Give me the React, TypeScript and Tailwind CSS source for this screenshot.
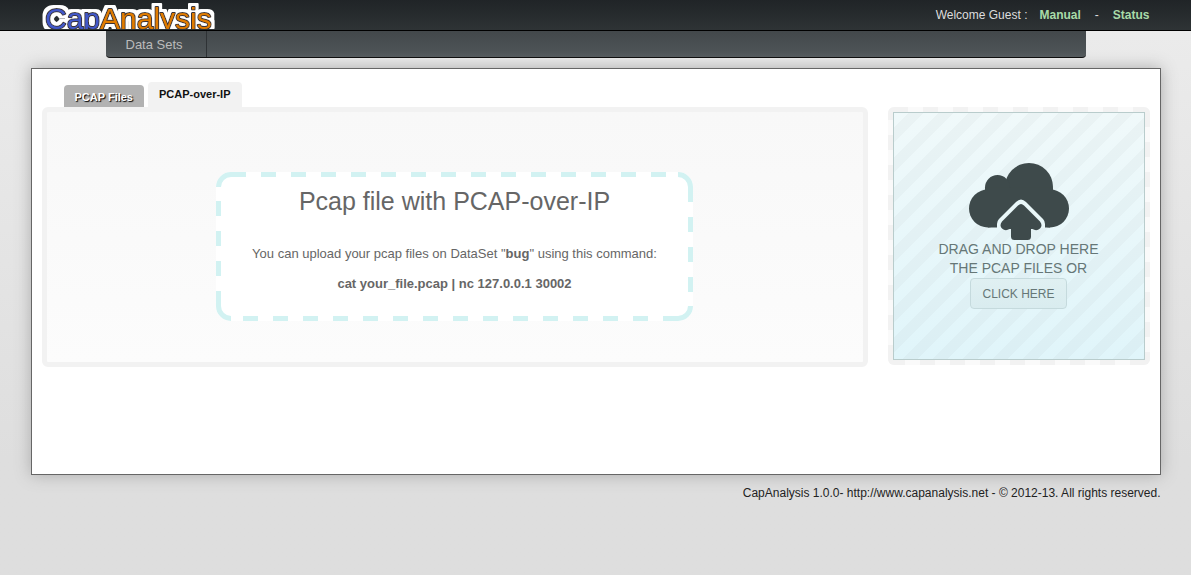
export default function App() {
  return (
    <div className="min-h-screen bg-linear-to-b from-[#ececec] to-[#dedede] to-80% font-['Liberation_Sans',Arial,sans-serif] text-xs text-[#222]">
      <header className="h-[31px] border-b border-black bg-linear-to-b from-[#202427] to-[#2e3335]">
        <div className="mx-auto flex h-full max-w-[1108px] items-center justify-between">
          <a href="#" aria-label="CapAnalysis" className="block h-[30px]">
            <svg width="175" height="30" viewBox="0 0 175 30" className="font-['Liberation_Sans',Arial,sans-serif] text-[30px]">
              <defs>
                <clipPath id="logo-clip"><rect width="175" height="29" /></clipPath>
                <filter id="logo-halo" filterUnits="userSpaceOnUse" x="0" y="0" width="175" height="45">
                  <feMorphology in="SourceAlpha" operator="dilate" radius="3" result="spread" />
                  <feFlood floodColor="#fff" />
                  <feComposite in2="spread" operator="in" result="halo" />
                  <feMerge>
                    <feMergeNode in="halo" />
                    <feMergeNode in="SourceGraphic" />
                  </feMerge>
                </filter>
              </defs>
              <g clipPath="url(#logo-clip)">
                <text x="3" y="29" stroke="#3a3238" strokeWidth="2" strokeLinejoin="round" filter="url(#logo-halo)" className="[paint-order:stroke]">
                  <tspan fill="#4259c9">Cap</tspan>
                  <tspan fill="#e07b00">Analysis</tspan>
                </text>
              </g>
            </svg>
          </a>
          <div className="flex items-center text-[#ddd]">
            <span>Welcome Guest :</span>
            <a href="#manual" className="ml-3 font-bold text-[#a8dba8]">Manual</a>
            <span className="mx-3.5">-</span>
            <a href="#status" className="font-bold text-[#a8dba8]">Status</a>
          </div>
        </div>
      </header>
      <nav className="mx-auto flex h-[27px] max-w-[980px] rounded-b border-b border-black bg-linear-to-b from-[#43484b] to-[#505659]">
        <a href="#datasets" className="flex w-[101px] items-center border-r border-[#2e3235] pt-0.5 pl-5 text-[13px] text-[#bbb]">Data Sets</a>
      </nav>
      <main className="mx-auto mt-2.5 min-h-[407px] max-w-[1130px] border border-[#666] bg-white px-2.5 pt-[13px] shadow-[0_0_15px_#aaa]">
        <div className="flex items-start gap-5">
          <section className="min-w-0 flex-1">
            <div role="tablist" className="flex h-[25px] items-end gap-1 pl-[22px] text-[11px] font-bold">
              <button role="tab" aria-selected="false" className="h-[22px] rounded-t bg-[#b2b2b2] px-[11px] pt-0.5 text-white [text-shadow:1px_1px_1px_#000]">PCAP Files</button>
              <button role="tab" aria-selected="true" className="h-[25px] rounded-t bg-[#f2f2f2] px-[11px] text-[#111]">PCAP-over-IP</button>
            </div>
            <div className="flex h-[260px] items-start justify-center rounded-md border-5 border-[#f2f2f2] bg-linear-to-b from-[#f8f8f8] to-[#fcfcfc] pt-[60px] text-[#666]">
              <div className="relative h-[149px] w-[477px] rounded-[15px] bg-white pt-[13px] text-center text-[13px]">
                <svg className="absolute inset-0" width="477" height="149" viewBox="0 0 477 149" fill="none" stroke="#d2f2f2" strokeWidth="5" aria-hidden="true">
                  <path d="M30 2.500H15A12.500 12.500 0 0 0 2.500 15M462 2.500A12.500 12.500 0 0 1 474.500 15V30M474.500 134A12.500 12.500 0 0 1 462 146.500H447M2.500 119V134A12.500 12.500 0 0 0 15 146.500" />
                  <path d="M45 2.500H450M474.500 45V120M27 146.500H432M2.500 29V104" strokeDasharray="15" />
                </svg>
                <h1 className="text-[25px] leading-8">Pcap file with PCAP-over-IP</h1>
                <p className="mt-7 leading-[18px]">You can upload your pcap files on DataSet "<b>bug</b>" using this command:</p>
                <p className="mt-3 font-bold leading-[18px]">cat your_file.pcap | nc 127.0.0.1 30002</p>
              </div>
            </div>
          </section>
          <aside className="relative mt-[25px] w-[262px] overflow-hidden rounded-md bg-[#fafafa] p-[5px]">
            <svg className="absolute inset-0" width="262" height="258" viewBox="0 0 262 258" fill="none" stroke="#f2f2f2" strokeWidth="5" aria-hidden="true">
              <path d="M20 2.500H2.500V13M245 2.500H259.500V20M259.500 245V255.500H242M2.500 238V255.500H17" />
              <path d="M35 2.500H230M259.500 35V230M32 255.500H230M2.500 28V223" strokeDasharray="15" />
            </svg>
            <div className="relative flex h-[248px] flex-col items-center border border-[#b9cccc] bg-[linear-gradient(135deg,transparent_25%,#00000006_25%,#00000006_50%,transparent_50%,transparent_75%,#00000006_75%),linear-gradient(#f0f9fa,#e0f5fa)] bg-size-[30px_30px,auto] pt-[50px] text-center text-sm text-[#667777]">
              <svg width="100" height="77" viewBox="0 0 100 77" fill="#3e4a4b" aria-hidden="true">
                <circle cx="60" cy="24" r="24" />
                <circle cx="28.500" cy="24.500" r="12.500" />
                <circle cx="19" cy="45.500" r="19" />
                <circle cx="81" cy="45.500" r="19" />
                <path d="M16 24.500H84V40H81V64.500H19V40H16z" />
                <path d="M28 65v-4q0-3 2-5l17-17q5-5 10 0l17 17q2 2 2 5v4z" className="fill-[#e9f7f9]" />
                <path d="M49 42.500q3-3 6 0l16 16q3 4 0 7-3.500 3-7.500.5H62v7.500q0 3.500-3.500 3.500h-13q-3.500 0-3.500-3.500V66h-1.500q-4 2.500-7.500-.5-3-3 0-7z" />
              </svg>
              <p className="leading-[19px]">DRAG AND DROP HERE<br />THE PCAP FILES OR</p>
              <button className="h-[31px] rounded border border-[#c5dadd] bg-linear-to-b from-[#e0f0f2] to-[#d9ecef] px-[11px] text-xs">CLICK HERE</button>
            </div>
          </aside>
        </div>
      </main>
      <footer className="mx-auto mt-2.5 max-w-[1130px] text-right leading-4">CapAnalysis 1.0.0- http://www.capanalysis.net - © 2012-13. All rights reserved.</footer>
    </div>
  );
}
